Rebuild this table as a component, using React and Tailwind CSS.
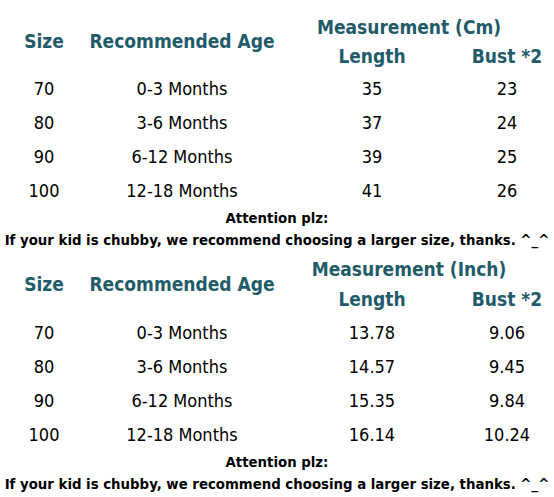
const HEAD = "text-[#1f5b69] font-bold text-[19px]";
const FONT = { fontFamily: '"DejaVu Sans Condensed", "DejaVu Sans", sans-serif' };

const cm = [
  ["70", "0-3 Months", "35", "23"],
  ["80", "3-6 Months", "37", "24"],
  ["90", "6-12 Months", "39", "25"],
  ["100", "12-18 Months", "41", "26"],
];

const inch = [
  ["70", "0-3 Months", "13.78", "9.06"],
  ["80", "3-6 Months", "14.57", "9.45"],
  ["90", "6-12 Months", "15.35", "9.84"],
  ["100", "12-18 Months", "16.14", "10.24"],
];

const SizeTable = ({ unit, rows, top, second }) => (
  <div className={`grid grid-cols-[88px_188px_192px_78px] ${top}`}>
    <div className={`${HEAD} row-span-2 flex items-center justify-center`}>Size</div>
    <div className={`${HEAD} row-span-2 flex items-center justify-center`}>Recommended Age</div>
    <div className={`${HEAD} col-span-2 h-[30px] flex items-center justify-center pr-[4px]`}>
      Measurement ({unit})
    </div>
    <div className={`${HEAD} ${second} flex items-center justify-center`}>Length</div>
    <div className={`${HEAD} ${second} flex items-center justify-center`}>Bust *2</div>
    {rows.map((r, i) =>
      r.map((c, j) => (
        <div key={i + "-" + j} className="h-[34px] flex items-center justify-center text-[18px] text-black">
          {c}
        </div>
      ))
    )}
  </div>
);

const Note = () => (
  <div className="text-center font-bold text-black text-[14.8px]">
    <div className="h-[22px] flex items-center justify-center">Attention plz:</div>
    <div className="h-[22px] flex items-center justify-center whitespace-nowrap">
      If your kid is chubby, we recommend choosing a larger size, thanks. ^_^
    </div>
  </div>
);

export default function App() {
  return (
    <div className="w-[554px] h-[497px] bg-white overflow-hidden" style={FONT}>
      <SizeTable unit="Cm" rows={cm} top="pt-[12px]" second="h-[29px]" />
      <Note />
      <div className="h-[3px]" />
      <SizeTable unit="Inch" rows={inch} top="pt-0" second="h-[31px]" />
      <Note />
    </div>
  );
}
